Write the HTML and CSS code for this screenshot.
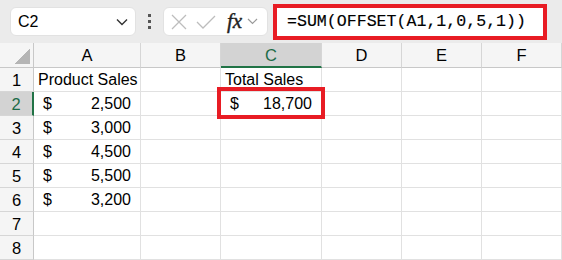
FILE: index.html
```html
<!DOCTYPE html>
<html lang="en">
<head>
    <meta charset="UTF-8">
    <title>OFFSET</title>
    <link rel="stylesheet" href="styles.css">
</head>
<body>
<div class="toolbar">
    <div class="namebox">
        <span>C2</span>
        <svg class="chev" width="12" height="8" viewBox="0 0 12 8"><path d="M1 1.5 L6 6.5 L11 1.5" fill="none" stroke="#333" stroke-width="1.4"/></svg>
    </div>
    <div class="dots"><i></i><i></i><i></i></div>
    <div class="fxbox">
        <svg width="16" height="16" viewBox="0 0 16 16"><path d="M1 1 L15 15 M15 1 L1 15" stroke="#bdbdbd" stroke-width="1.3"/></svg>
        <svg width="20" height="16" viewBox="0 0 20 16"><path d="M1 8 L7 14 L19 2" fill="none" stroke="#bdbdbd" stroke-width="1.3"/></svg>
        <span class="fx">fx</span>
        <svg width="11" height="7" viewBox="0 0 11 7"><path d="M1 1 L5.5 5.5 L10 1" fill="none" stroke="#9a9a9a" stroke-width="1.2"/></svg>
    </div>
    <div class="formula">=SUM(OFFSET(A1,1,0,5,1))</div>
</div>
<div class="sheet">
    <div class="corner"><span></span></div>
    <div class="colhead">A</div>
    <div class="colhead">B</div>
    <div class="colhead sel">C</div>
    <div class="colhead">D</div>
    <div class="colhead">E</div>
    <div class="colhead">F</div>

    <div class="rowhead">1</div>
    <div class="cell">Product Sales</div>
    <div class="cell"></div>
    <div class="cell">Total Sales</div>
    <div class="cell"></div><div class="cell"></div><div class="cell"></div>

    <div class="rowhead sel">2</div>
    <div class="cell money"><span>$</span><span>2,500</span></div>
    <div class="cell"></div>
    <div class="cell money total"><span>$</span><span>18,700</span></div>
    <div class="cell"></div><div class="cell"></div><div class="cell"></div>

    <div class="rowhead">3</div>
    <div class="cell money"><span>$</span><span>3,000</span></div>
    <div class="cell"></div><div class="cell"></div><div class="cell"></div><div class="cell"></div><div class="cell"></div>

    <div class="rowhead">4</div>
    <div class="cell money"><span>$</span><span>4,500</span></div>
    <div class="cell"></div><div class="cell"></div><div class="cell"></div><div class="cell"></div><div class="cell"></div>

    <div class="rowhead">5</div>
    <div class="cell money"><span>$</span><span>5,500</span></div>
    <div class="cell"></div><div class="cell"></div><div class="cell"></div><div class="cell"></div><div class="cell"></div>

    <div class="rowhead">6</div>
    <div class="cell money"><span>$</span><span>3,200</span></div>
    <div class="cell"></div><div class="cell"></div><div class="cell"></div><div class="cell"></div><div class="cell"></div>

    <div class="rowhead">7</div>
    <div class="cell"></div><div class="cell"></div><div class="cell"></div><div class="cell"></div><div class="cell"></div><div class="cell"></div>

    <div class="rowhead">8</div>
    <div class="cell"></div><div class="cell"></div><div class="cell"></div><div class="cell"></div><div class="cell"></div><div class="cell"></div>
</div>
</body>
</html>
```
FILE: styles.css
```css
* {
    margin: 0;
    padding: 0;
    box-sizing: border-box;
}

body {
    width: 562px;
    height: 260px;
    overflow: hidden;
    background: #fff;
    font-family: "Liberation Sans", Arial, sans-serif;
    font-size: 16px;
    color: #000;
}

/* barre de formule */
.toolbar {
    height: 43px;
    background: #ebebeb;
    display: flex;
    align-items: center;
    padding-left: 10px;
}

.namebox {
    width: 126px;
    height: 29px;
    background: #fff;
    border: 1px solid #e2e2e2;
    border-radius: 6px;
    display: flex;
    align-items: center;
    justify-content: space-between;
    padding: 0 7px 0 7px;
    font-size: 16px;
}

.dots {
    width: 27px;
    display: flex;
    flex-direction: column;
    align-items: center;
    gap: 3px;
}

.dots i {
    width: 3px;
    height: 3px;
    background: #555;
}

.fxbox {
    width: 105px;
    height: 29px;
    background: #fff;
    border: 1px solid #e2e2e2;
    border-radius: 6px;
    display: flex;
    align-items: center;
    gap: 9px;
    padding-left: 7px;
}

.fx {
    font-family: "Liberation Serif", serif;
    font-style: italic;
    font-size: 21px;
    color: #222;
    margin-left: 2px;
    margin-right: -4px;
    -webkit-text-stroke: 0.4px #222;
}

.formula {
    margin-left: 5px;
    width: 274px;
    height: 36px;
    background: #fff;
    border: 4px solid #e81c24;
    font-family: "Liberation Mono", monospace;
    font-size: 16.6px;
    line-height: 28px;
    padding-left: 10px;
    -webkit-text-stroke: 0.15px #000;
}

/* grille */
.sheet {
    display: grid;
    grid-template-columns: 34px 107px 80px 101px 80px 80px 80px;
    grid-template-rows: 25px repeat(8, 24px);
}

.corner {
    background: #f5f5f5;
    border-right: 1px solid #c8c8c8;
    border-bottom: 1px solid #c8c8c8;
    display: flex;
    align-items: flex-end;
    justify-content: flex-end;
    padding: 0 3px 3px 0;
}

.corner span {
    width: 15px;
    height: 15px;
    background: linear-gradient(to bottom right, transparent 50%, #b5b5b5 50%);
}

.colhead {
    background: #f5f5f5;
    border-right: 1px solid #d6d6d6;
    border-bottom: 1px solid #c8c8c8;
    text-align: center;
    line-height: 24px;
    font-size: 16.5px;
}

.colhead.sel {
    background: #d3d3d3;
    color: #1d6b48;
    border-bottom: 2px solid #217346;
}

.rowhead {
    background: #f5f5f5;
    border-right: 1px solid #c8c8c8;
    border-bottom: 1px solid #d6d6d6;
    text-align: center;
    line-height: 24px;
    font-size: 16.5px;
}

.rowhead.sel {
    background: #d3d3d3;
    color: #1d6b48;
    border-right: 2px solid #217346;
}

.cell {
    border-right: 1px solid #e1e1e1;
    border-bottom: 1px solid #e1e1e1;
    padding: 0 3px 2px 4px;
    display: flex;
    align-items: flex-end;
    white-space: nowrap;
}

.money {
    justify-content: space-between;
    padding: 0 9px 2px 9px;
}

.total {
    position: relative;
}

.total::after {
    content: "";
    position: absolute;
    top: -5px;
    left: -4px;
    right: -4px;
    bottom: -4px;
    border: 4px solid #e81c24;
}
```
